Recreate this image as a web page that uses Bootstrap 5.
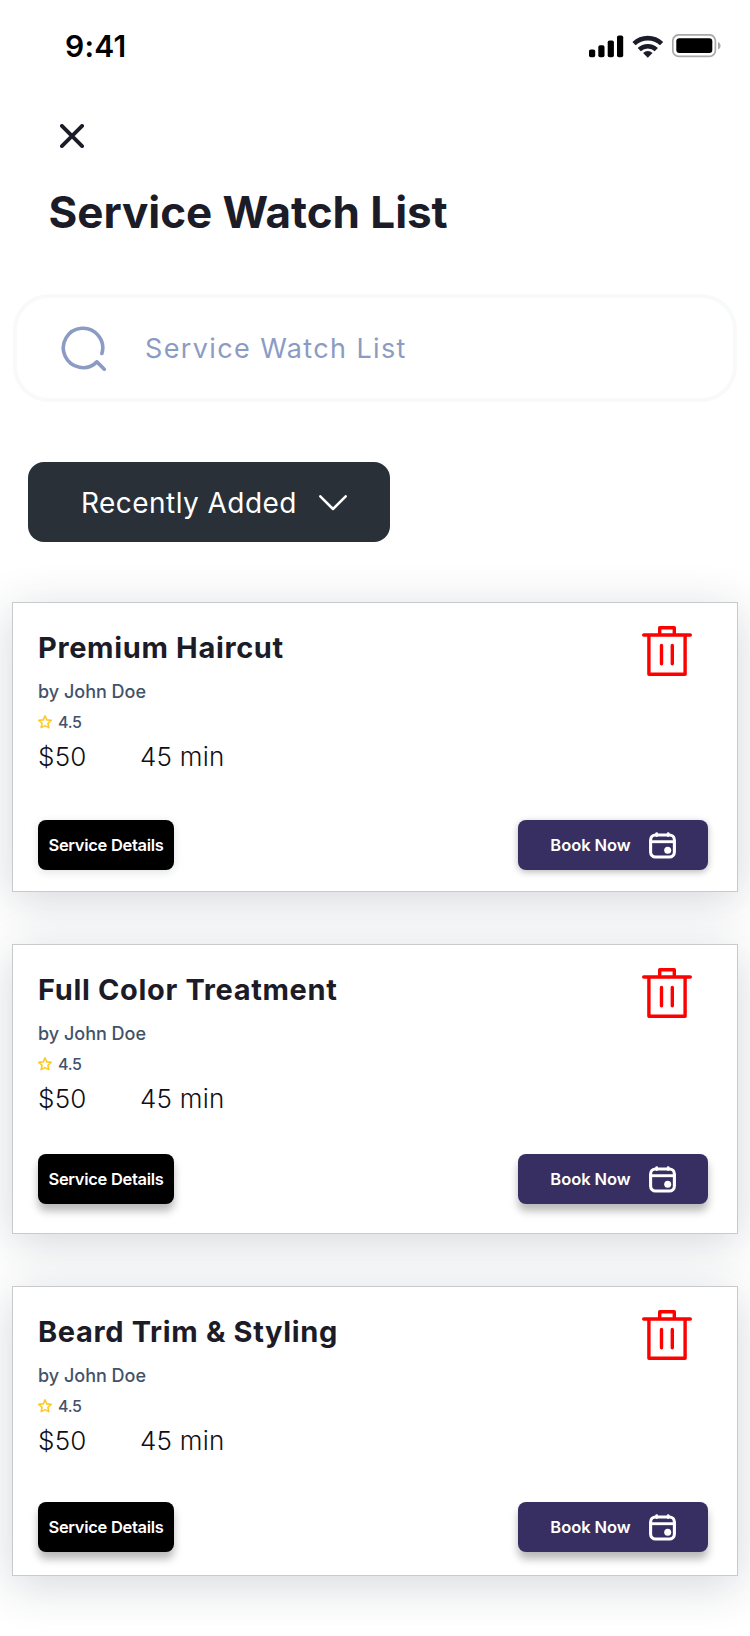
<!DOCTYPE html>
<html lang="en">
<head>
<meta charset="utf-8">
<meta name="viewport" content="width=device-width, initial-scale=1">
<title>Service Watch List</title>
<link rel="stylesheet" href="https://cdn.jsdelivr.net/npm/bootstrap@5.3.0/dist/css/bootstrap.min.css">
<style>
  body { font-family: Inter, "Liberation Sans", sans-serif; color: #1c1b28; background: #fff; }
  svg { display: block; flex: none; }
  .screen { width: 750px; height: 1636px; overflow: hidden; }
  .status-bar { height: 90px; padding: 2px 28px 0 65px; }
  .clock { font-size: 30px; font-weight: 600; letter-spacing: .2px; line-height: 40px; color: #000; }
  .close-btn { margin: 34px 0 0 60px; width: 24px; height: 24px; }
  .page-title { margin: 34px 0 0 48.5px; font-size: 44px; line-height: 60px; font-weight: 700; letter-spacing: -.05px; }
  .search-box { margin: 52px 13px 0; height: 108px; border: 4px solid #f8f9f9; border-radius: 36px; padding: 2px 0 0 44px; color: #8c9bc4; }
  .search-box span { margin-left: 38px; font-size: 27px; letter-spacing: 1.38px; line-height: 40px; }
  .sort-btn { margin: 60px 0 0 28px; width: 362px; height: 80px; border-radius: 16px; background: #293038; color: #fff; padding: 2px 0 0 53px; font-size: 28px; letter-spacing: .45px; }
  .sort-btn:hover { background: #293038; color: #fff; }
  .sort-btn svg { margin-left: 22px; }
  .battery { margin-left: 8px; }
  .services { margin: 60px 12px 0; gap: 52px; }
  .service-card { height: 290px; border: 1px solid #c9cacb; border-radius: 0; padding: 25px 29px 0 25px; box-shadow: 0 9px 44px rgba(30, 42, 62, .19); }
  .service-name { font-size: 29px; line-height: 40px; font-weight: 700; letter-spacing: .65px; }
  .service-by { margin-top: 12px; font-size: 18px; line-height: 24px; font-weight: 450; color: #42526a; }
  .rating { margin-top: 8px; font-size: 16px; line-height: 20px; font-weight: 450; letter-spacing: -.3px; color: #42526a; gap: 6px; }
  .facts { margin-top: 9px; font-size: 26px; line-height: 32px; font-weight: 340; letter-spacing: .25px; color: #101014; }
  .facts span:first-child { width: 102px; }
  .trash { margin: -2px 16px 0 0; }
  .actions .btn { height: 50px; border: 0; border-radius: 8px; font-size: 16.5px; font-weight: 600; color: #fff; padding: 0; line-height: 24px; }
  .btn-details { width: 136px; background: #000 !important; letter-spacing: -.3px; box-shadow: 0 7px 8px rgba(0, 0, 0, .28); }
  .btn-book { width: 190px; background: #372f61 !important; letter-spacing: -.05px; gap: 18px; box-shadow: 0 7px 8px rgba(0, 0, 0, .28); }
  .actions-low { margin-top: 48px; }
  .actions-low .btn-details { box-shadow: 0 2px 8px rgba(30, 42, 62, .14); }
  .actions-low .btn-book { box-shadow: 0 2px 7px rgba(0, 0, 0, .28); }
  .actions-high { margin-top: 40px; }
  .actions-mid { margin-top: 46px; }
  .facts-end { margin-bottom: -1px; }
</style>
</head>
<body>
<svg class="d-none">
  <symbol id="i-trash" viewBox="0 0 50 50">
    <g fill="none" stroke="#f00" stroke-width="3.4" stroke-linecap="round" stroke-linejoin="round">
      <path d="M1.7 9h46.600M6.900 9v39.200h36.200V9M17.700 9V1.700h14.600V9M19.500 19.500v18.200M30.300 19.500v18.200"/>
    </g>
  </symbol>
  <symbol id="i-calendar" viewBox="0 0 27 27">
    <rect x="1.600" y="3" width="23.800" height="22" rx="5" fill="none" stroke="#fff" stroke-width="3.100"/>
    <path d="M2 9.700h23" stroke="#fff" stroke-width="2.900"/>
    <path d="M7.700 1.600v2M19.200 1.600v2" stroke="#fff" stroke-width="2.800" stroke-linecap="round"/>
    <circle cx="18.700" cy="18.300" r="3.500" fill="#fff"/>
  </symbol>
  <symbol id="i-star" viewBox="0 0 14 14">
    <path d="M7 .9l1.800 4 4.400.45-3.300 2.900.95 4.350L7 10.600l-3.850 2 .95-4.350L.8 5.350l4.400-.45z" fill="none" stroke="#fdc926" stroke-width="1.600" stroke-linejoin="round"/>
  </symbol>
</svg>

<main class="screen">
  <header class="status-bar d-flex align-items-center justify-content-between">
    <span class="clock">9:41</span>
    <div class="d-flex align-items-center">
      <svg width="35" height="23" viewBox="0 0 35 23"><rect x="0" y="14.500" width="6.200" height="7.800" rx="1.800"/><rect x="9.300" y="10.300" width="6.200" height="12" rx="1.800"/><rect x="18.700" y="5.500" width="6.200" height="16.800" rx="1.800"/><rect x="28" y="0.500" width="6.200" height="21.800" rx="1.800"/></svg>
      <svg class="ms-2" width="32" height="23" viewBox="0 0 32 23" fill="none" stroke="#1c1b28" stroke-width="4.600"><path d="M2 8.600a20 20 0 0 1 27.600 0M7.300 14.600a12.400 12.400 0 0 1 17 0"/><path d="M15.800 22.700l-4.700-4.700a6.800 6.800 0 0 1 9.400 0z" fill="#1c1b28" stroke="none"/></svg>
      <svg class="battery" width="50" height="24" viewBox="0 0 50 24"><rect x=".8" y=".8" width="42.600" height="21.600" rx="6" fill="none" stroke="#a9a9a9" stroke-width="1.700"/><rect x="4.300" y="4.200" width="36" height="14.800" rx="3" /><path d="M46 8c3.400 1 3.400 6.400 0 7.400z" fill="#a9a9a9"/></svg>
    </div>
  </header>

  <button class="close-btn btn p-0 border-0 d-block" aria-label="Close">
    <svg width="24" height="24" viewBox="0 0 24 24" stroke="#1c1b28" stroke-width="3.800" stroke-linecap="round"><path d="M1.900 1.900l20.200 20.200M22.100 1.900L1.900 22.100"/></svg>
  </button>

  <h1 class="page-title">Service Watch List</h1>

  <div class="search-box d-flex align-items-center">
    <svg width="46" height="46" viewBox="0 0 46 46" fill="none" stroke="#8c9bc4" stroke-width="3.600" stroke-linecap="round" stroke-linejoin="round"><path d="M40.900 27.500A19.700 19.700 0 1 0 35.900 35.900L43.300 43.200M35.900 35.900l-1.500 1.200"/></svg>
    <span>Service Watch List</span>
  </div>

  <button class="sort-btn btn border-0 d-flex align-items-center">
    <span>Recently Added</span>
    <svg width="28" height="16" viewBox="0 0 28 16" fill="none" stroke="#fff" stroke-width="2.500" stroke-linecap="round" stroke-linejoin="round"><path d="M1.300 1.300L14 14l12.700-12.700"/></svg>
  </button>

  <section class="services d-flex flex-column">
    <article class="service-card card">
      <div class="d-flex justify-content-between">
        <div>
          <h2 class="service-name mb-0">Premium Haircut</h2>
          <div class="service-by">by John Doe</div>
          <div class="rating d-flex align-items-center"><svg width="14" height="14"><use href="#i-star"/></svg>4.5</div>
          <div class="facts facts-end d-flex"><span>$50</span><span>45 min</span></div>
        </div>
        <svg class="trash" width="50" height="50"><use href="#i-trash"/></svg>
      </div>
      <div class="actions actions-low d-flex justify-content-between">
        <button class="btn btn-details">Service Details</button>
        <button class="btn btn-book d-flex align-items-center justify-content-center"><span>Book Now</span><svg width="27" height="27"><use href="#i-calendar"/></svg></button>
      </div>
    </article>

    <article class="service-card card">
      <div class="d-flex justify-content-between">
        <div>
          <h2 class="service-name mb-0">Full Color Treatment</h2>
          <div class="service-by">by John Doe</div>
          <div class="rating d-flex align-items-center"><svg width="14" height="14"><use href="#i-star"/></svg>4.5</div>
          <div class="facts facts-end d-flex"><span>$50</span><span>45 min</span></div>
        </div>
        <svg class="trash" width="50" height="50"><use href="#i-trash"/></svg>
      </div>
      <div class="actions actions-high d-flex justify-content-between">
        <button class="btn btn-details">Service Details</button>
        <button class="btn btn-book d-flex align-items-center justify-content-center"><span>Book Now</span><svg width="27" height="27"><use href="#i-calendar"/></svg></button>
      </div>
    </article>

    <article class="service-card card">
      <div class="d-flex justify-content-between">
        <div>
          <h2 class="service-name mb-0">Beard Trim &amp; Styling</h2>
          <div class="service-by">by John Doe</div>
          <div class="rating d-flex align-items-center"><svg width="14" height="14"><use href="#i-star"/></svg>4.5</div>
          <div class="facts facts-end d-flex"><span>$50</span><span>45 min</span></div>
        </div>
        <svg class="trash" width="50" height="50"><use href="#i-trash"/></svg>
      </div>
      <div class="actions actions-mid d-flex justify-content-between">
        <button class="btn btn-details">Service Details</button>
        <button class="btn btn-book d-flex align-items-center justify-content-center"><span>Book Now</span><svg width="27" height="27"><use href="#i-calendar"/></svg></button>
      </div>
    </article>
  </section>
</main>
<script src="https://cdn.jsdelivr.net/npm/bootstrap@5.3.0/dist/js/bootstrap.bundle.min.js"></script>
</body>
</html>
